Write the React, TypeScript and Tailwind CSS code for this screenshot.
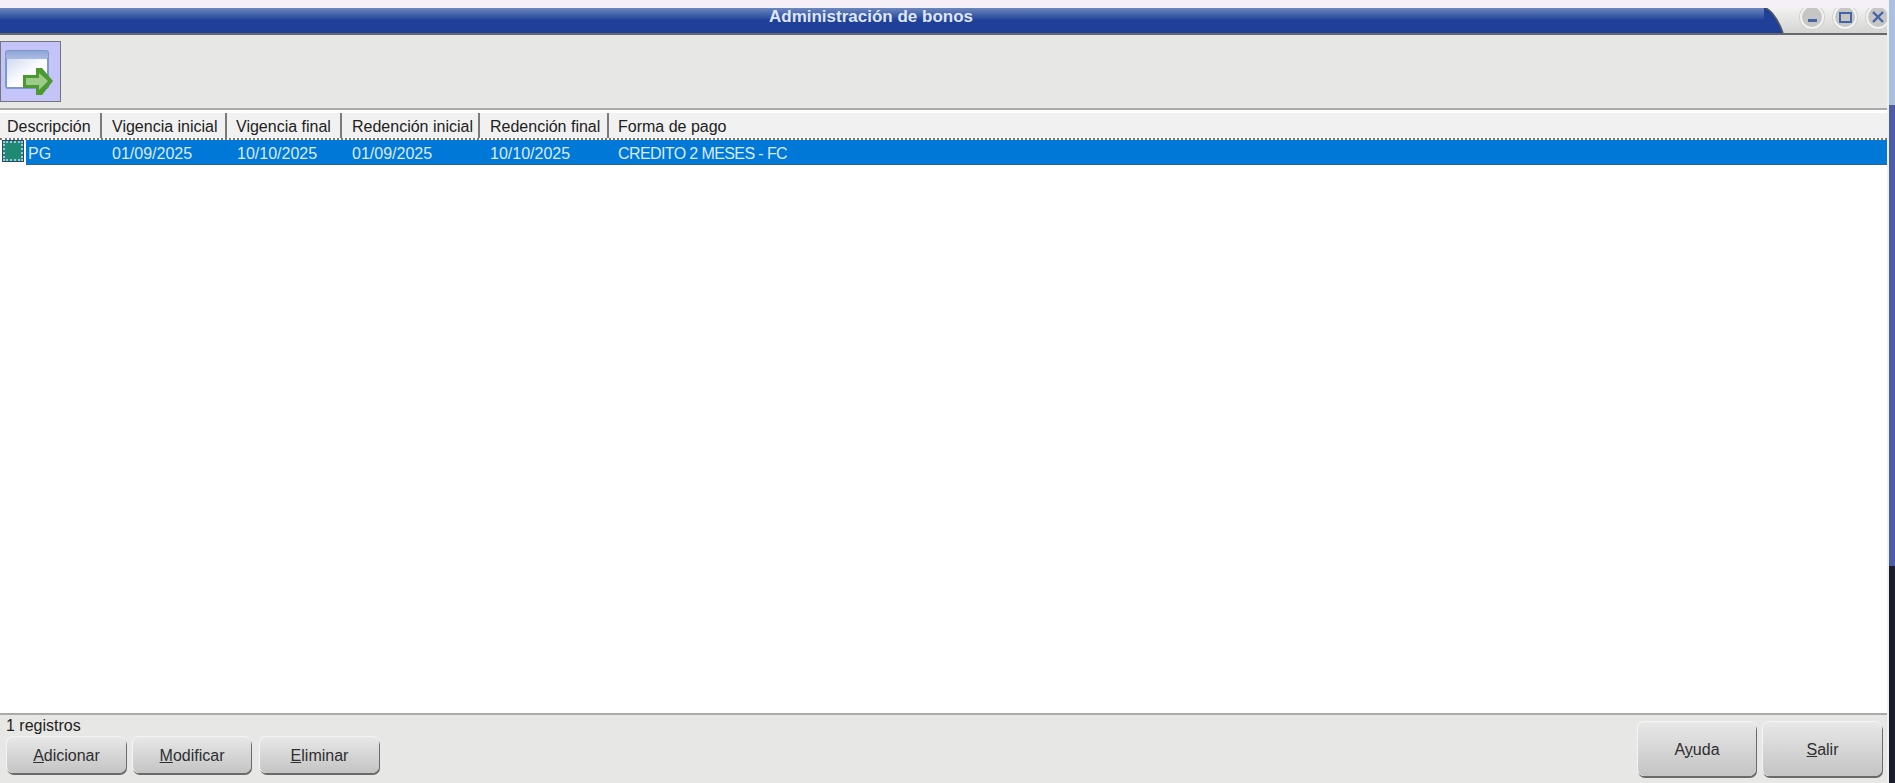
import { ReactNode } from "react"

const columns = [
  { label: "Descripción", width: "w-[102px]", pad: "pl-[7px]" },
  { label: "Vigencia inicial", width: "w-[125px]", pad: "pl-[10px]" },
  { label: "Vigencia final", width: "w-[115px]", pad: "pl-[9px]" },
  { label: "Redención inicial", width: "w-[138px]", pad: "pl-[10px]" },
  { label: "Redención final", width: "w-[129px]", pad: "pl-[10px]" },
]

function AppButton({ className, children }: { className: string; children: ReactNode }) {
  return (
    <button className={`flex items-center justify-center rounded-[7px] border-t border-l border-[#f4f4f4] bg-gradient-to-b from-[#e8e8e8] to-[#c4c4c4] pt-[1px] text-[16px] text-[#2f2f2f] shadow-[1px_2px_0_0_#6a6a6a] ${className}`}>
      {children}
    </button>
  )
}

function WindowControl({ children }: { children: ReactNode }) {
  return (
    <div className="flex h-[24px] w-[24px] shrink-0 items-center justify-center rounded-full border-2 border-[#f3f3f3] bg-[#c6c7c5] shadow-[0_0_0_1px_#d0d1cf]">
      {children}
    </div>
  )
}

function WindowIcon() {
  return (
    <svg width="59" height="59" viewBox="0 0 59 59">
      <defs>
        <linearGradient id="page" x1="0" y1="0" x2="1" y2="1">
          <stop offset="0" stopColor="#cfdaf2" />
          <stop offset="0.55" stopColor="#ffffff" />
        </linearGradient>
        <linearGradient id="bar" x1="0" y1="0" x2="0" y2="1">
          <stop offset="0" stopColor="#8fa6d6" />
          <stop offset="1" stopColor="#a9bce2" />
        </linearGradient>
      </defs>
      <rect x="4" y="8" width="44" height="39" rx="3" fill="#7c98cc" />
      <rect x="5" y="9" width="42" height="8" rx="2" fill="url(#bar)" />
      <rect x="6" y="17" width="40" height="28" fill="url(#page)" />
      <path d="M22 33h13v-7h6l11 13-11 14h-6v-7H22z" fill="#4a9a30" />
      <path d="M25 36h13v-5l9 8-9 9v-5H25z" fill="#9ccb8a" />
    </svg>
  )
}

export default function App() {
  return (
    <div className="flex h-[783px] w-[1895px] overflow-hidden bg-[#e7e8e6] font-['Liberation_Sans',sans-serif] text-[16px] text-[#222]">
      <div className="flex w-[1889px] flex-col bg-[#f5f0f8]">
        <div className="h-[8px] shrink-0" />

        <div className="flex min-h-0 flex-1 flex-col overflow-hidden rounded-tr-[7px] border-r-2 border-[#f0f0f0] bg-[#e7e8e6]">
          {/* Title bar */}
          <div className="flex h-[27px] shrink-0 overflow-hidden border-b-2 border-[#66686c] bg-gradient-to-b from-[#f2f2f0] to-[#d4d5d3]">
            <div className="flex flex-1 items-start justify-center bg-gradient-to-b from-[#6d86bd] via-[#1f3f99] to-[#1f3f99] pr-[22px]">
              <span className="text-[17px] font-bold leading-[18px] text-[#dfe6f5]">Administración de bonos</span>
            </div>
            <svg width="20" height="25" viewBox="0 0 20 25" className="shrink-0">
              <path d="M0 0H2C9 4 15 14 19 25H0z" fill="#1f3f99" />
              <path d="M2 0C9 4 15 14 19 25" fill="none" stroke="#55575c" strokeWidth="1.5" />
            </svg>
            <div className="flex w-[103px] items-start justify-end gap-[9px]">
              <div className="-mt-[3px]">
                <WindowControl><span className="mt-[6px] h-[3px] w-[9px] bg-[#4464a8]" /></WindowControl>
              </div>
              <div className="-mt-[3px]">
                <WindowControl><span className="h-[11px] w-[13px] border-2 border-[#4464a8]" /></WindowControl>
              </div>
              <div className="-mr-[3px] -mt-[3px]">
                <WindowControl>
                  <svg width="12" height="12" viewBox="0 0 12 12"><path d="M1 1l10 10M11 1L1 11" stroke="#4464a8" strokeWidth="2.4" /></svg>
                </WindowControl>
              </div>
            </div>
          </div>

          {/* Toolbar */}
          <div className="flex h-[75px] shrink-0 items-start border-b-2 border-[#a9aaa9] pt-[6px]">
            <div className="flex h-[61px] w-[61px] items-center justify-center border border-[#75767c] bg-[#c4c4f8]">
              <WindowIcon />
            </div>
          </div>

          {/* Grid */}
          <div className="flex min-h-0 flex-1 flex-col bg-white">
            <div className="flex h-[30px] shrink-0 border-b-2 border-dotted border-[#777] pt-[3px]">
              <div className="flex flex-1 bg-[#f1f1f1]">
                {columns.map((col) => (
                  <div key={col.label} className={`${col.width} ${col.pad} flex shrink-0 items-center border-r-2 border-[#7a7a7a] pt-[2px]`}>
                    <span className="whitespace-nowrap">{col.label}</span>
                  </div>
                ))}
                <div className="flex items-center pl-[9px] pt-[2px]">Forma de pago</div>
              </div>
            </div>
            <div className="flex h-[25px] shrink-0 items-stretch">
              <div className="flex w-[26px] shrink-0 items-start pl-[3px] pt-[1px]">
                <div className="flex h-[20px] w-[20px] items-center justify-center border-2 border-dotted border-[#a8c4d8] bg-[#1f8a74] outline outline-1 outline-[#1c4f6e]" />
              </div>
              <div className="flex flex-1 items-center border-b border-dotted border-[#555] bg-[#0078d7] pt-[3px] text-[#dcebfa]">
                <span className="w-[86px] pl-[2px]">PG</span>
                <span className="w-[125px]">01/09/2025</span>
                <span className="w-[115px]">10/10/2025</span>
                <span className="w-[138px]">01/09/2025</span>
                <span className="w-[128px]">10/10/2025</span>
                <span className="tracking-[-0.6px]">CREDITO 2 MESES - FC</span>
              </div>
            </div>
          </div>

          {/* Footer */}
          <div className="flex h-[70px] shrink-0 justify-between border-t-2 border-[#a9aaa9] pl-[6px] pr-[5px]">
            <div className="flex flex-col">
              <span className="mt-[2px] leading-[18px]">1 registros</span>
              <div className="mt-[1px] flex">
                <AppButton className="h-[37px] w-[120px]"><span><u>A</u>dicionar</span></AppButton>
                <AppButton className="ml-[6px] h-[37px] w-[119px]"><span><u>M</u>odificar</span></AppButton>
                <AppButton className="ml-[8px] h-[37px] w-[120px]"><span><u>E</u>liminar</span></AppButton>
              </div>
            </div>
            <div className="flex gap-[6px] pt-[6px]">
              <AppButton className="h-[55px] w-[119px]"><span>A<u>y</u>uda</span></AppButton>
              <AppButton className="h-[55px] w-[120px]"><span><u>S</u>alir</span></AppButton>
            </div>
          </div>
        </div>
      </div>

      {/* Desktop edge behind the window */}
      <div className="flex w-[6px] flex-col">
        <div className="h-[105px] bg-[#a9c0de]" />
        <div className="h-[461px] bg-[#4b5ca9]" />
        <div className="flex-1 bg-[#1b1d2e]" />
      </div>
    </div>
  )
}
